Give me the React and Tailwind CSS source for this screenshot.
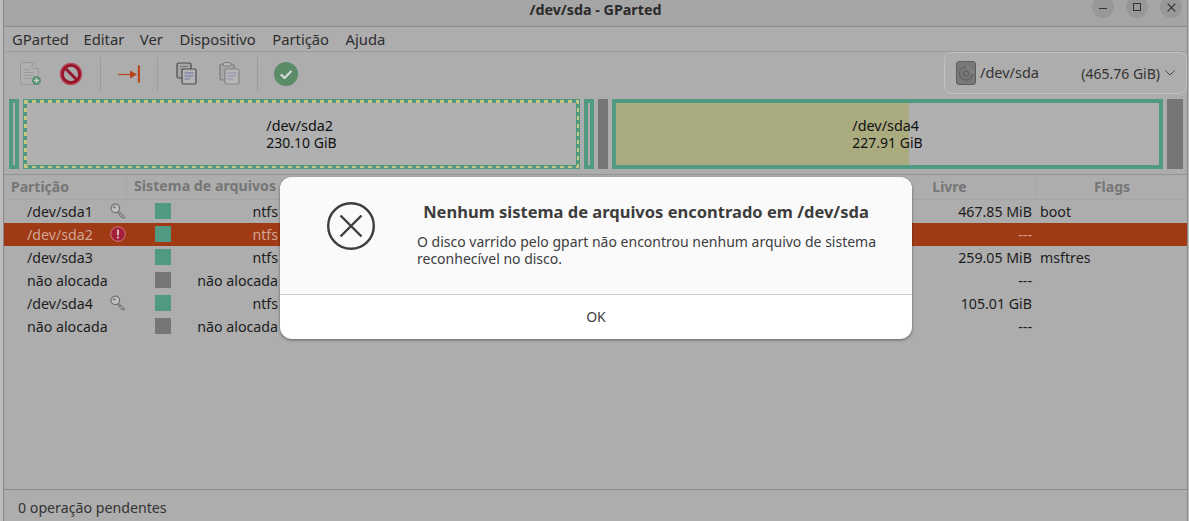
import React from "react";

function Key() {
  return (
    <svg width="16" height="16" viewBox="0 0 18 18">
      <circle cx="6" cy="6" r="4.800" fill="#c2c2c2" stroke="#6e6e6e" strokeWidth="1.300" />
      <circle cx="4.800" cy="4.800" r="1.500" fill="#7e7e7e" />
      <path d="M9 9.200 L16 15 L16 16.600 L13.600 16.600 L12.800 15 L11.400 14.600 L11 13.200 L7.800 10.200" fill="#c2c2c2" stroke="#6e6e6e" strokeWidth="1.200" strokeLinejoin="round" />
    </svg>
  );
}

function Warn() {
  return (
    <svg width="16" height="16" viewBox="0 0 18 18">
      <circle cx="9" cy="9" r="8.200" fill="#a51e3a" stroke="#c98a8a" strokeWidth="1" />
      <rect x="8" y="3.800" width="2" height="6.600" rx="0.600" fill="#e4cccc" />
      <rect x="8" y="11.800" width="2" height="2.200" fill="#e4cccc" />
    </svg>
  );
}

function NewDoc() {
  return (
    <svg width="24" height="26" viewBox="0 0 24 26" fill="none">
      <path d="M1.500 2.500a1 1 0 0 1 1-1H13l6 6v15a1 1 0 0 1-1 1H2.500a1 1 0 0 1-1-1z" fill="#b0b0b0" stroke="#989898" strokeWidth="1" />
      <path d="M13 1.500V7.500H19" stroke="#989898" strokeWidth="1" />
      <path d="M4.500 8.500H11M4.500 11.500H15M4.500 14.500H15M4.500 17.500H12" stroke="#9c9c9c" strokeWidth="1" />
      <circle cx="17.500" cy="19.500" r="4.500" fill="#5d9274" />
      <path d="M17.500 17V22M15 19.500H20" stroke="#c8d4cc" strokeWidth="1.300" />
    </svg>
  );
}

function Stop() {
  return (
    <svg width="24" height="24" viewBox="0 0 24 24">
      <circle cx="12" cy="12" r="10.600" fill="#97142a" stroke="#b54d5d" strokeWidth="1.200" />
      <circle cx="12" cy="12" r="7.200" fill="#a9a9a9" />
      <path d="M6.800 6.800 L17.200 17.200" stroke="#97142a" strokeWidth="3" />
    </svg>
  );
}

function Apply() {
  return (
    <svg width="24" height="24" viewBox="0 0 24 24">
      <circle cx="12" cy="12" r="12" fill="#5a8c68" />
      <path d="M6.800 12.400 L10.600 16 L17.400 9" fill="none" stroke="#d4dcd6" strokeWidth="2.200" />
    </svg>
  );
}

function Arrow() {
  return (
    <svg width="22" height="20" viewBox="0 0 22 20">
      <path d="M0 10.500H13" stroke="#b8451b" strokeWidth="1.200" />
      <path d="M12 6.500L19 10.500L12 14.500Z" fill="#b8451b" />
      <rect x="19.800" y="1.500" width="2.200" height="17" fill="#b8451b" />
    </svg>
  );
}

function Copy() {
  return (
    <svg width="21" height="23" viewBox="0 0 21 23" fill="none">
      <rect x="1" y="1" width="14" height="15" rx="1.500" fill="#a6a6a6" stroke="#4a4a4a" strokeWidth="1.200" />
      <path d="M4 4.500H12M4 7H8" stroke="#777" strokeWidth="1" />
      <rect x="6" y="7" width="14" height="15" rx="1.500" fill="#b4b4b4" stroke="#4a4a4a" strokeWidth="1.200" />
      <path d="M8.500 11H17.500M8.500 14H17.500M8.500 17H14" stroke="#6e6ea8" strokeWidth="1" />
    </svg>
  );
}

function Paste() {
  return (
    <svg width="21" height="23" viewBox="0 0 21 23" fill="none">
      <rect x="1" y="2" width="14" height="16" rx="2" fill="#a6a6a6" stroke="#7a7a7a" strokeWidth="1.200" />
      <rect x="4.500" y="0.600" width="7" height="3.400" rx="1" fill="#bcbcbc" stroke="#7a7a7a" strokeWidth="1" />
      <rect x="6" y="7" width="14" height="15" rx="1.500" fill="#b6b6b6" stroke="#858585" strokeWidth="1.200" />
      <path d="M8.500 11H17.500M8.500 14H17.500M8.500 17H14" stroke="#9090b4" strokeWidth="1" />
    </svg>
  );
}

function Disk() {
  return (
    <svg width="20" height="24" viewBox="0 0 20 24">
      <rect x="0.500" y="0.500" width="19" height="23" rx="2.500" fill="#787878" stroke="#5e5e5e" />
      <circle cx="10" cy="12.500" r="6.600" fill="none" stroke="#5a5a5a" strokeWidth="1" />
      <circle cx="10" cy="12.500" r="2.600" fill="none" stroke="#5a5a5a" strokeWidth="1" />
      <path d="M10 5.900A6.600 6.600 0 0 1 16.600 12.500" fill="none" stroke="#9a9a9a" strokeWidth="1" />
    </svg>
  );
}

function Sep() {
  return <div className="w-px h-[34px] bg-[#9c9c9c]" />;
}

const GREEN = "bg-[#4f9a80]";
const GRAY = "bg-[#767676]";

const rows = [
  { name: "/dev/sda1", icon: "key", swatch: GREEN, fs: "ntfs", free: "467.85 MiB", flags: "boot" },
  { name: "/dev/sda2", icon: "warn", swatch: GREEN, fs: "ntfs", free: "---", flags: "", selected: true },
  { name: "/dev/sda3", swatch: GREEN, fs: "ntfs", free: "259.05 MiB", flags: "msftres" },
  { name: "não alocada", swatch: GRAY, fs: "não alocada", free: "---", flags: "" },
  { name: "/dev/sda4", icon: "key", swatch: GREEN, fs: "ntfs", free: "105.01 GiB", flags: "" },
  { name: "não alocada", swatch: GRAY, fs: "não alocada", free: "---", flags: "" },
];

function PartLabel({ name, size }) {
  return (
    <div className="text-[14px] leading-[17px] text-[#111] text-left">
      <div className="text-[14.400px]">{name}</div>
      <div>{size}</div>
    </div>
  );
}

function Row({ r }) {
  return (
    <div className={`flex h-[23px] items-center text-[14.200px] ${r.selected ? "bg-[#a03a15] text-[#cfa594]" : "text-[#1c1c1c]"}`}>
      <div className="w-[103px] shrink-0 pl-[23px] whitespace-nowrap">{r.name}</div>
      <div className="w-[22px] h-[17px] shrink-0 flex justify-center mb-[1px]">
        {r.icon === "key" && <Key />}
        {r.icon === "warn" && <Warn />}
      </div>
      <div className="w-[26px] shrink-0" />
      <div className={`w-[16px] h-[16px] mb-[1px] shrink-0 ${r.swatch}`} />
      <div className="w-[107px] shrink-0 text-right whitespace-nowrap">{r.fs}</div>
      <div className="flex-1" />
      <div className="w-[170px] shrink-0 text-right whitespace-nowrap">{r.free}</div>
      <div className="w-[155px] shrink-0 pl-[8px] whitespace-nowrap">{r.flags}</div>
    </div>
  );
}

export default function App() {
  return (
    <div className="relative w-[1189px] h-[521px] overflow-hidden bg-[#bcbcbc] pl-[3px] pr-[1px] font-['Noto_Sans',sans-serif]">
      <div className="h-full flex flex-col bg-[#adadad] border-x border-[#8a8a8a]">
        {/* title bar */}
        <div className="relative h-[27px] shrink-0 bg-[#a5a5a5] border-b border-[#8c8c8c] flex justify-center">
          <div className="pt-[1px] text-[14.300px] leading-[17px] font-bold text-[#2a2a2a]">/dev/sda - GParted</div>
          <div className="absolute right-[5px] top-[-4px] flex gap-[12px]">
            <div className="w-[22px] h-[22px] rounded-full bg-[#989898] flex items-center justify-center">
              <div className="w-[8px] h-[1.500px] bg-[#333] mt-[3px]" />
            </div>
            <div className="w-[22px] h-[22px] rounded-full bg-[#989898] flex items-center justify-center">
              <div className="w-[8px] h-[8px] border border-[#333]" />
            </div>
            <div className="w-[22px] h-[22px] rounded-full bg-[#989898] flex items-center justify-center">
              <svg width="9" height="9" viewBox="0 0 9 9"><path d="M.7.7 8.300 8.300M8.300.7.7 8.300" stroke="#333" strokeWidth="1.200" /></svg>
            </div>
          </div>
        </div>
        {/* menu */}
        <div className="h-[25px] shrink-0 border-b border-[#9c9c9c] flex items-center pl-[8px] gap-[15.500px] text-[14.800px] text-[#2e2e2e]">
          <span>GParted</span>
          <span className="-ml-px">Editar</span>
          <span>Ver</span>
          <span className="ml-px">Dispositivo</span>
          <span className="ml-px">Partição</span>
          <span className="ml-px">Ajuda</span>
        </div>
        {/* toolbar */}
        <div className="h-[43px] shrink-0 flex items-center pl-[15px]">
          <NewDoc />
          <div className="ml-[17px] -translate-x-px"><Stop /></div>
          <div className="ml-[16px]"><Sep /></div>
          <div className="ml-[17px]"><Arrow /></div>
          <div className="ml-[17px]"><Sep /></div>
          <div className="ml-[18px]"><Copy /></div>
          <div className="ml-[22px]"><Paste /></div>
          <div className="ml-[17px]"><Sep /></div>
          <div className="ml-[16px]"><Apply /></div>
          <div className="ml-auto w-[243px] h-[42px] rounded-[8px] border border-[#c2c2c2] flex items-center pl-[11px] pr-[11px] text-[14px] text-[#333] mt-[-1px]">
            <Disk />
            <span className="ml-[4px] text-[14.500px]">/dev/sda</span>
            <span className="ml-auto">(465.76 GiB)</span>
            <svg className="ml-[5px]" width="10" height="6" viewBox="0 0 10 6"><path d="M.5.5 5 5 9.500.5" fill="none" stroke="#444" strokeWidth="1" /></svg>
          </div>
        </div>
        {/* graph */}
        <div className="h-[70px] mt-[4px] shrink-0 flex pl-[5px] gap-[4px]">
          <div className="w-[10px] border-[4px] border-[#4f9a80]" />
          <div className="relative w-[557px] border-[4px] border-[#4f9a80] flex items-center justify-center bg-[#b0b0b0]">
            <div className="absolute left-[-3px] right-[-3px] top-[-3px] h-[2.500px] bg-[repeating-linear-gradient(90deg,#c9c47f_0_4px,transparent_4px_8px)]" />
            <div className="absolute left-[-3px] right-[-3px] bottom-[-3px] h-[2.500px] bg-[repeating-linear-gradient(90deg,#c9c47f_0_4px,transparent_4px_8px)]" />
            <div className="absolute left-[-3px] top-[-3px] bottom-[-3px] w-[2.500px] bg-[repeating-linear-gradient(180deg,#c9c47f_0_4px,transparent_4px_8px)]" />
            <div className="absolute right-[-3px] top-[-3px] bottom-[-3px] w-[2.500px] bg-[repeating-linear-gradient(180deg,#c9c47f_0_4px,transparent_4px_8px)]" />
            <PartLabel name="/dev/sda2" size="230.10 GiB" />
          </div>
          <div className="w-[10px] border-[4px] border-[#4f9a80]" />
          <div className={`w-[10px] ${GRAY}`} />
          <div className="relative w-[551px] border-[4px] border-[#4f9a80] flex items-center justify-center bg-[#b0b0b0]">
            <div className="absolute left-0 top-0 bottom-0 w-[293px] bg-[#abab80]" />
            <div className="relative"><PartLabel name="/dev/sda4" size="227.91 GiB" /></div>
          </div>
          <div className={`w-[16px] ${GRAY}`} />
        </div>
        {/* table */}
        <div className="mt-[5px] flex-1 border-t border-[#929292] flex flex-col min-h-0">
          <div className="h-[25px] shrink-0 flex items-center text-[14px] font-bold text-[#767676] border-b border-[#a6a6a6]">
            <div className="w-[123px] pl-[7px] pb-[2px] border-r border-[#a6a6a6] h-full flex items-center">Partição</div>
            <div className="pl-[7px] pb-[2px] whitespace-nowrap text-[14.200px]">Sistema de arquivos</div>
            <div className="flex-1" />
            <div className="w-[174px] pb-[2px] text-center border-r border-[#a6a6a6] h-full flex items-center justify-center">Livre</div>
            <div className="w-[150px] pb-[2px] text-center">Flags</div>
          </div>
          {rows.map((r, i) => <Row key={i} r={r} />)}
        </div>
        {/* status */}
        <div className="h-[32px] shrink-0 border-t border-[#8a8a8a] flex items-center pl-[14px] pt-[5px] text-[14.200px] text-[#333]">
          0 operação pendentes
        </div>
      </div>

      {/* dialog */}
      <div className="absolute left-[280px] top-[177px] w-[632px] h-[162px] rounded-[12px] overflow-hidden shadow-[0_1px_3px_rgba(0,0,0,0.45)] flex flex-col bg-white">
        <div className="h-[118px] shrink-0 bg-[#fafafa] border-b border-[#cfcfcf] flex">
          <div className="w-[137px] shrink-0 pl-[47px] pt-[25px]">
            <svg width="48" height="48" viewBox="0 0 48 48" fill="none">
              <circle cx="24" cy="24" r="22.800" stroke="#3d3d3d" strokeWidth="2.400" />
              <path d="M13.500 13.500 34.500 34.500M34.500 13.500 13.500 34.500" stroke="#3d3d3d" strokeWidth="2.400" />
            </svg>
          </div>
          <div className="flex-1 pt-[25px]">
            <div className="w-[458px] text-center text-[16.500px] leading-[20px] font-bold text-[#3d3d3d] whitespace-nowrap">Nenhum sistema de arquivos encontrado em /dev/sda</div>
            <div className="mt-[11px] text-[14px] leading-[17px] text-[#3d3d3d] whitespace-pre-line">{"O disco varrido pelo gpart não encontrou nenhum arquivo de sistema\nreconhecível no disco."}</div>
          </div>
        </div>
        <div className="flex-1 flex items-center justify-center pb-[2px] text-[14px] text-[#3d3d3d]">OK</div>
      </div>
    </div>
  );
}
